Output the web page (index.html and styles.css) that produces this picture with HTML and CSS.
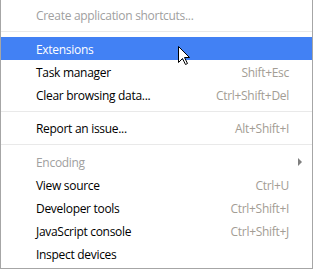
FILE: index.html
```html
<!DOCTYPE html>
<html>
<head>
<meta charset="utf-8">
<link rel="stylesheet" href="styles.css">
</head>
<body>
<div class="menu">
  <div class="item disabled"><span class="label">Create application shortcuts...</span></div>
  <div class="sep"></div>
  <div class="item active"><span class="label">Extensions</span></div>
  <div class="item"><span class="label">Task manager</span><span class="key">Shift+Esc</span></div>
  <div class="item"><span class="label">Clear browsing data...</span><span class="key">Ctrl+Shift+Del</span></div>
  <div class="sep sep-short"></div>
  <div class="item"><span class="label">Report an issue...</span><span class="key">Alt+Shift+I</span></div>
  <div class="sep"></div>
  <div class="item disabled"><span class="label">Encoding</span><span class="arrow"></span></div>
  <div class="item"><span class="label">View source</span><span class="key">Ctrl+U</span></div>
  <div class="item"><span class="label">Developer tools</span><span class="key">Ctrl+Shift+I</span></div>
  <div class="item"><span class="label">JavaScript console</span><span class="key">Ctrl+Shift+J</span></div>
  <div class="item"><span class="label">Inspect devices</span></div>
</div>
<svg class="cursor" width="13" height="20" viewBox="0 0 13 20">
  <path d="M0.5 0.5 L0.5 16.5 L4.5 12.5 L7.5 18.5 L9.5 17.5 L6.5 11.5 L11.5 11.5 Z" fill="#fff" stroke="#000" stroke-width="1" stroke-linejoin="miter"/>
</svg>
</body>
</html>
```
FILE: styles.css
```css
html, body {
  margin: 0;
  padding: 0;
  background: #fff;
}
body {
  width: 313px;
  height: 269px;
  position: relative;
  overflow: hidden;
  font-family: "Open Sans", "Noto Sans", sans-serif;
  font-size: 12px;
  letter-spacing: -0.3px;
}
.menu {
  box-sizing: border-box;
  width: 313px;
  height: 269px;
  border-left: 1px solid #a6a6a6;
  border-right: 1px solid #a6a6a6;
  border-bottom: 1px solid #a6a6a6;
  padding-top: 3px;
  display: flex;
  flex-direction: column;
}
.item {
  height: 23px;
  flex: none;
  display: flex;
  align-items: center;
  padding: 1px 23px 0 35px;
  box-sizing: border-box;
  color: #000;
}
.item.disabled { color: #a0a0a0; }
.item.active { background: #4281f4; color: #fff; }
.label { flex: 1; }
.key { color: #a39d94; }
.sep {
  height: 11px;
  flex: none;
  padding-top: 5px;
  box-sizing: border-box;
}
.sep-short { height: 10px; }
.sep::before {
  content: "";
  display: block;
  width: 100%;
  height: 1px;
  background: #e9e9e9;
}
.arrow {
  width: 0;
  height: 0;
  border-top: 4px solid transparent;
  border-bottom: 4px solid transparent;
  border-left: 4px solid #7f7f7f;
  margin-right: -13px;
}
.cursor {
  position: absolute;
  left: 178px;
  top: 46px;
}
```
